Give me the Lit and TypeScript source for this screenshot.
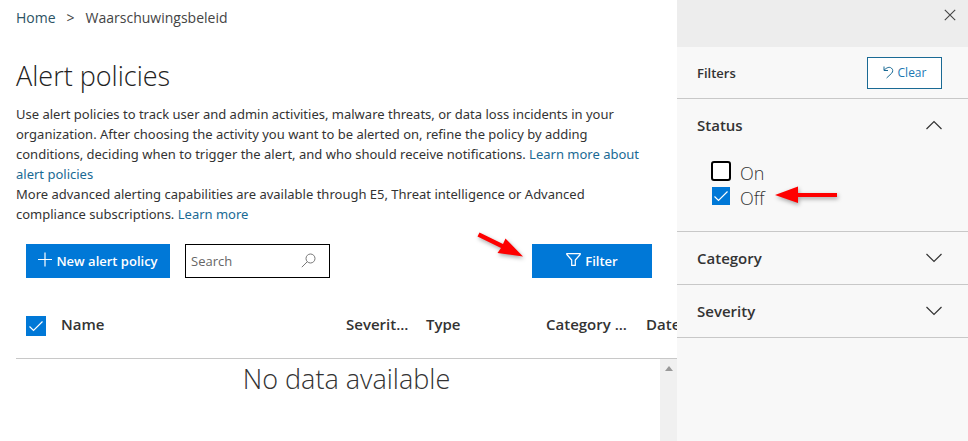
import { LitElement, html, css, svg } from "lit";
import { customElement, property, state } from "lit/decorators.js";

const font = css`"Segoe UI", "Open Sans", "Noto Sans", sans-serif`;

@customElement("check-box")
class CheckBox extends LitElement {
  @property() label = "";
  @property() size = "small";
  @property({ type: Boolean }) checked = false;
  @property({ type: Boolean }) hideLabel = false;

  static styles = css`
    :host { display: block; font-family: ${font}; }
    .row { display: flex; align-items: center; gap: 9px; height: 25px; }
    .box { display: grid; place-items: center; width: 20px; height: 20px; }
    .box > * { grid-area: 1 / 1; }
    input {
      appearance: none; box-sizing: border-box; margin: 0;
      width: 20px; height: 20px;
      background: #fff; border: 2px solid #000; border-radius: 3px;
    }
    input:checked { width: 18px; height: 18px; background: #0078d7; border: 0; border-radius: 0; }
    .large input:checked { width: 20px; height: 20px; }
    svg { pointer-events: none; z-index: 1; }
    .text { font-size: 18px; font-weight: 300; line-height: 20px; color: #333; padding-top: 4px; }
  `;

  render() {
    return html`
      <label class="row ${this.size}">
        <span class="box">
          <input type="checkbox" aria-label=${this.label} .checked=${this.checked}
            @change=${(e: Event) => (this.checked = (e.target as HTMLInputElement).checked)} />
          ${this.checked
            ? html`<svg width="16" height="16" viewBox="0 0 16 16" fill="none" stroke="#fff" stroke-width="1.2"><path d="M1.5 8.5 5.5 12.5 14.5 3.5" /></svg>`
            : ""}
        </span>
        ${this.hideLabel ? "" : html`<span class="text">${this.label}</span>`}
      </label>
    `;
  }
}

@customElement("filter-section")
class FilterSection extends LitElement {
  @property() heading = "";
  @property({ type: Boolean }) open = false;

  static styles = css`
    :host { display: block; border-bottom: 1px solid #c8c8c8; font-family: ${font}; }
    .head {
      display: flex; align-items: center; justify-content: space-between;
      box-sizing: border-box; width: 100%; height: 52px; padding: 0 26px 0 20px;
      border: 0; background: none; color: #333; text-align: left;
      font: 600 15px/20px ${font};
    }
    .body { padding: 7px 26px 23px 34px; }
  `;

  render() {
    return html`
      <button class="head" aria-expanded=${this.open} @click=${() => (this.open = !this.open)}>
        ${this.heading}
        <svg width="16" height="10" viewBox="0 0 16 10" fill="none" stroke="#333" stroke-width="1.2">
          ${this.open ? svg`<path d="M.5 9 8 1.5 15.5 9" />` : svg`<path d="M.5 1 8 8.5 15.5 1" />`}
        </svg>
      </button>
      ${this.open ? html`<div class="body"><slot></slot></div>` : ""}
    `;
  }
}

@customElement("app-root")
class AppRoot extends LitElement {
  @state() columns = ["Name", "Severit...", "Type", "Category ...", "Date"];

  static styles = css`
    :host {
      display: flex; min-height: 100vh; background: #fff; color: #333;
      font: 14px/20px ${font};
    }
    a { color: #1a6a94; text-decoration: none; }
    button { font-family: inherit; border-radius: 0; cursor: pointer; }
    main {
      flex: 1; min-width: 0; display: flex; flex-direction: column;
      box-sizing: border-box; padding: 8px 0 0 16px; overflow: hidden;
    }
    .crumbs { display: flex; gap: 11px; color: #444; }
    .crumbs a { color: #2c5364; }
    h1 { margin: 28px 0 8px; font-size: 27px; font-weight: 300; line-height: 40px; color: #222; }
    .intro { margin: 0; padding-right: 32px; font-family: "Segoe UI", "Noto Sans", "Open Sans", sans-serif; font-size: 13px; }
    .toolbar { position: relative; display: flex; gap: 15px; margin: 20px 25px 0 10px; }
    .primary {
      display: flex; align-items: center; justify-content: center; gap: 4px;
      height: 34px; padding: 0; border: 0; background: #0078d7; color: #fff;
      font-size: 13px; font-weight: 600; line-height: 20px; white-space: nowrap;
    }
    .new { width: 144px; }
    .filter { width: 120px; margin-left: auto; }
    .search {
      display: flex; align-items: center; box-sizing: border-box;
      width: 145px; height: 34px; padding: 0 12px 0 5px; border: 1px solid #000;
    }
    .search input {
      flex: 1; min-width: 0; padding: 0; border: 0; outline: 0; background: none;
      font: 13px/20px ${font};
    }
    .search input::placeholder { color: #666; opacity: 1; }
    .arrow { filter: drop-shadow(1px 2px 2px rgba(0, 0, 0, 0.35)); pointer-events: none; }
    .point-filter { position: absolute; right: 128px; top: -12px; }
    .grid { flex: 1; display: flex; margin-top: 12px; }
    table { width: 100%; table-layout: fixed; border-collapse: separate; border-spacing: 0; }
    th {
      box-sizing: border-box; height: 69px; padding: 0; border-bottom: 1px solid #c8c8c8;
      text-align: left; font-size: 15px; font-weight: 600; line-height: 20px; white-space: nowrap;
    }
    th.pick { padding: 4px 0 0 10px; }
    .c-pick { width: 45px; }
    .c-severity { width: 80px; }
    .c-type { width: 120px; }
    .c-category { width: 100px; }
    .c-date { width: 31px; }
    .empty {
      position: relative; padding: 0; vertical-align: top; text-align: center;
      font-size: 27px; font-weight: 300; line-height: 40px; color: #333;
    }
    .track {
      position: absolute; top: 0; right: 0; bottom: 0; width: 17px;
      display: flex; justify-content: center; background: #f0f0f0;
    }
    .track svg { margin-top: 7px; }
    aside { flex: 0 0 291px; background: #f8f8f8; }
    .top { display: flex; justify-content: flex-end; box-sizing: border-box; height: 47px; padding: 9px 12px; background: #ededed; }
    .close { display: block; width: 12px; height: 12px; padding: 0; border: 0; background: none; }
    .close svg { display: block; }
    .bar {
      display: flex; align-items: center; justify-content: space-between;
      height: 51px; padding: 0 26px 0 20px; border-bottom: 1px solid #c8c8c8;
    }
    h2 { margin: 0; font-size: 13px; font-weight: 600; line-height: 20px; }
    .clear {
      display: flex; align-items: center; justify-content: center; gap: 4px;
      width: 75px; height: 32px; padding: 0; border: 1px solid #1a6a94; background: #fff;
      color: #1a78b4; font-size: 12px; line-height: 20px;
    }
    .option { position: relative; }
    .point-off { position: absolute; left: 63px; top: 0; }
  `;

  render() {
    return html`
      <main>
        <nav class="crumbs"><a href="#">Home</a><span>&gt;</span><span>Waarschuwingsbeleid</span></nav>
        <h1>Alert policies</h1>
        <p class="intro">
          Use alert policies to track user and admin activities, malware threats, or data loss incidents in your
          organization. After choosing the activity you want to be alerted on, refine the policy by adding
          conditions, deciding when to trigger the alert, and who should receive notifications.
          <a href="#">Learn more about alert policies</a>
        </p>
        <p class="intro">
          More advanced alerting capabilities are available through E5, Threat intelligence or Advanced
          compliance subscriptions. <a href="#">Learn more</a>
        </p>
        <div class="toolbar">
          <button class="primary new">
            <svg width="14" height="18" viewBox="0 0 14 18" fill="none" stroke="#fff" stroke-width="1.2"><path d="M0 7.5H14M7 .5V14.5" /></svg>
            New alert policy
          </button>
          <label class="search">
            <input type="text" placeholder="Search" aria-label="Search" />
            <svg width="16" height="16" viewBox="0 0 16 16" fill="none" stroke="#777"><circle cx="9.5" cy="5.5" r="4.5" /><path d="M6.3 8.7.8 14.2" /></svg>
          </label>
          <button class="primary filter">
            <svg width="15" height="18" viewBox="0 0 15 18" fill="none" stroke="#fff" stroke-width="1.2"><path d="M.8 1.6H14.2V2.4L9.3 8V13.4H5.7V8L.8 2.4Z" /></svg>
            Filter
          </button>
          <svg class="arrow point-filter" width="48" height="30" viewBox="0 0 48 30" fill="#fe0000"><path d="M3.5 .5 27 12 29.5 6.5 47 24.5 21.5 21 25 16 1.5 4.5Z" /></svg>
        </div>
        <div class="grid">
          <table>
            <colgroup>
              <col class="c-pick" /><col /><col class="c-severity" /><col class="c-type" /><col class="c-category" /><col class="c-date" />
            </colgroup>
            <thead>
              <tr>
                <th class="pick"><check-box label="Select all" size="large" hideLabel checked></check-box></th>
                ${this.columns.map((c) => html`<th>${c}</th>`)}
              </tr>
            </thead>
            <tbody>
              <tr>
                <td class="empty" colspan="6">
                  No data available
                  <div class="track"><svg width="8" height="5" viewBox="0 0 8 5" fill="#999"><path d="M0 5 4 0 8 5Z" /></svg></div>
                </td>
              </tr>
            </tbody>
          </table>
        </div>
      </main>
      <aside>
        <div class="top">
          <button class="close" aria-label="Close">
            <svg width="12" height="12" viewBox="0 0 12 12" stroke="#444" stroke-width="1.1"><path d="M.8.8 11.2 11.2M11.2.8.8 11.2" /></svg>
          </button>
        </div>
        <div class="bar">
          <h2>Filters</h2>
          <button class="clear">
            <svg width="11" height="14" viewBox="0 0 11 14" fill="none" stroke="#1a6a94"><path d="M1 .5V4.5H5M1 4.3C4 1.2 6.5.7 8.3 2 10.3 3.5 10 5.8 8.7 7.2L3.6 12" /></svg>
            Clear
          </button>
        </div>
        <filter-section heading="Status" open>
          <check-box label="On"></check-box>
          <div class="option">
            <check-box label="Off" checked></check-box>
            <svg class="arrow point-off" width="64" height="24" viewBox="0 0 64 24" fill="#fe0000"><path d="M1 12 24 3.5V10H63V14H24V20Z" /></svg>
          </div>
        </filter-section>
        <filter-section heading="Category"></filter-section>
        <filter-section heading="Severity"></filter-section>
      </aside>
    `;
  }
}
